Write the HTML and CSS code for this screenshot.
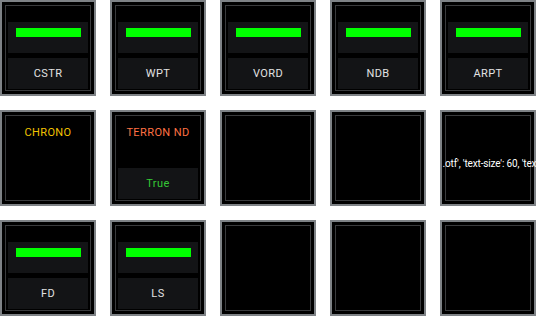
FILE: index.html
```html
<!DOCTYPE html>
<html lang="en">
<head>
  <meta charset="UTF-8" />
  <title>Panel</title>
  <link rel="stylesheet" href="styles.css">
</head>
<body>
  <div class="grid">
    <div class="card"><div class="inner">
      <div class="bar-panel"><div class="bar"></div></div>
      <div class="label">CSTR</div>
    </div></div>
    <div class="card"><div class="inner">
      <div class="bar-panel"><div class="bar"></div></div>
      <div class="label">WPT</div>
    </div></div>
    <div class="card"><div class="inner">
      <div class="bar-panel"><div class="bar"></div></div>
      <div class="label">VORD</div>
    </div></div>
    <div class="card"><div class="inner">
      <div class="bar-panel"><div class="bar"></div></div>
      <div class="label">NDB</div>
    </div></div>
    <div class="card"><div class="inner">
      <div class="bar-panel"><div class="bar"></div></div>
      <div class="label">ARPT</div>
    </div></div>

    <div class="card"><div class="inner">
      <div class="title chrono">CHRONO</div>
    </div></div>
    <div class="card"><div class="inner">
      <div class="title terron">TERRON ND</div>
      <div class="label value">True</div>
    </div></div>
    <div class="card"><div class="inner"></div></div>
    <div class="card"><div class="inner"></div></div>
    <div class="card"><div class="inner">
      <div class="raw">.otf', 'text-size': 60, 'text</div>
    </div></div>

    <div class="card"><div class="inner">
      <div class="bar-panel"><div class="bar"></div></div>
      <div class="label">FD</div>
    </div></div>
    <div class="card"><div class="inner">
      <div class="bar-panel"><div class="bar"></div></div>
      <div class="label">LS</div>
    </div></div>
    <div class="card"><div class="inner"></div></div>
    <div class="card"><div class="inner"></div></div>
    <div class="card"><div class="inner"></div></div>
  </div>
</body>
</html>
```
FILE: styles.css
```css
html, body {
  margin: 0;
  padding: 0;
  background: #fff;
  font-family: Roboto, "Liberation Sans", sans-serif;
}
.grid {
  display: grid;
  grid-template-columns: repeat(5, 96px);
  grid-auto-rows: 96px;
  gap: 14px;
}
.card {
  box-sizing: border-box;
  border: 2px solid #7e8286;
  background: #000;
  padding: 3px;
}
.inner {
  box-sizing: border-box;
  height: 100%;
  border: 1px solid #3a3b3d;
  display: flex;
  flex-direction: column;
  padding: 16px 2px 1px;
}
.bar-panel {
  height: 31px;
  background: #131416;
  box-sizing: border-box;
  padding-top: 6px;
  display: flex;
  justify-content: center;
  margin-bottom: 5px;
}
.bar {
  width: 65px;
  height: 9px;
  background: #00ff00;
}
.label {
  height: 31px;
  background: #131416;
  color: #e2e2e2;
  font-size: 11px;
  display: flex;
  align-items: center;
  justify-content: center;
  letter-spacing: 0.4px;
}
.title {
  height: 31px;
  font-size: 11px;
  text-align: center;
  letter-spacing: 0.4px;
  margin-top: -7px;
  line-height: 16px;
  margin-bottom: 12px;
}
.chrono {
  color: #f2c200;
}
.terron {
  color: #ff7143;
}
.value {
  margin-top: auto;
  color: #35c935;
}
.raw {
  margin-top: 26px;
  padding-left: 6px;
  color: #fff;
  font-size: 10px;
  letter-spacing: -0.15px;
  white-space: nowrap;
  display: flex;
  justify-content: center;
}
```
